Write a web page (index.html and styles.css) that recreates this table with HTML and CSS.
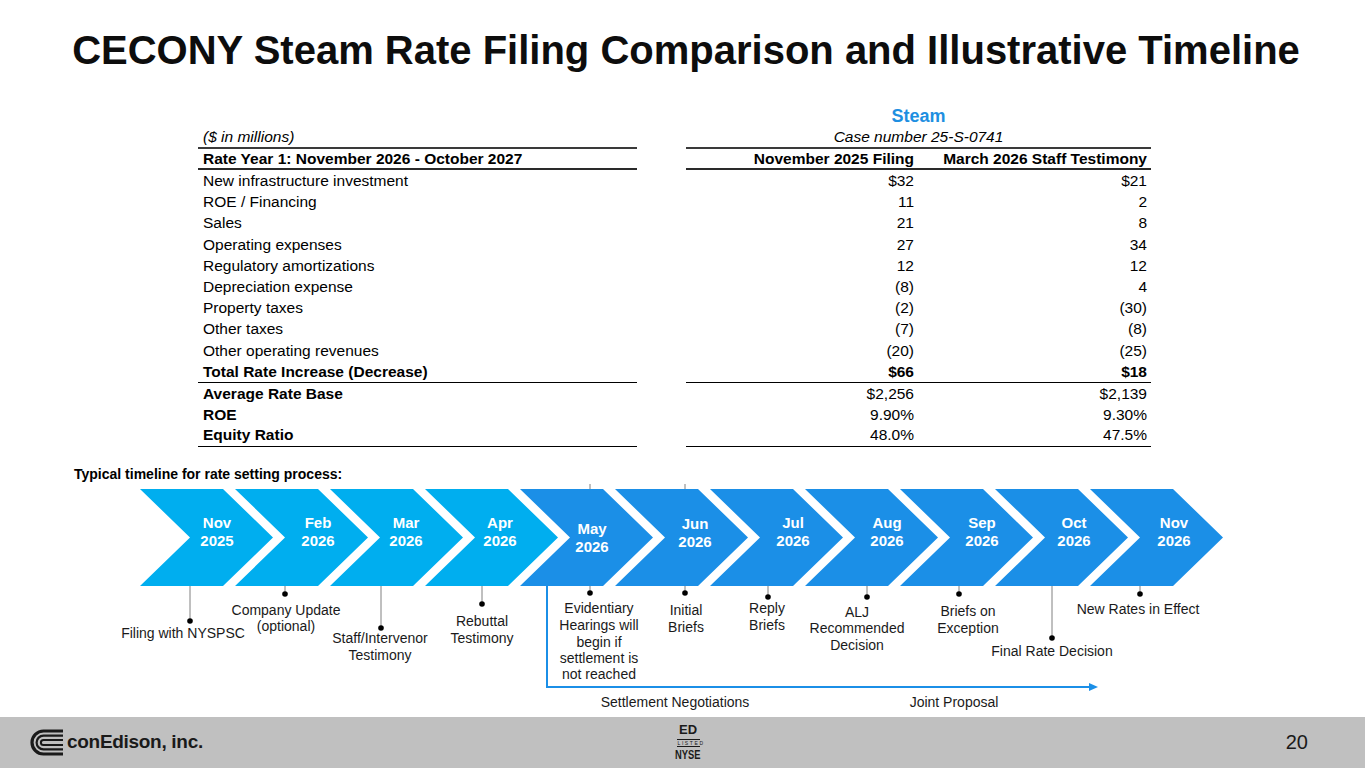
FILE: index.html
```html
<!DOCTYPE html>
<html lang="en">
<head>
<meta charset="utf-8">
<title>CECONY Steam Rate Filing Comparison and Illustrative Timeline</title>
<link rel="stylesheet" href="styles.css">
</head>
<body>
<div class="page">
  <h1 class="title">CECONY Steam Rate Filing Comparison and Illustrative Timeline</h1>

  <section class="rates">
    <div class="steam">Steam</div>
    <div class="row caption-row">
      <div class="c0 it ruled2">($ in millions)</div>
      <div class="gap"></div>
      <div class="case it ruled2">Case number 25-S-0741</div>
    </div>
    <div class="row head-row b">
      <div class="c0 ruled15">Rate Year 1: November 2026 - October 2027</div>
      <div class="gap"></div>
      <div class="num ruled15">November 2025 Filing</div>
      <div class="num ruled15">March 2026 Staff Testimony</div>
    </div>
    <div class="row"><div class="c0">New infrastructure investment</div><div class="gap"></div><div class="num">$32</div><div class="num">$21</div></div>
    <div class="row"><div class="c0">ROE / Financing</div><div class="gap"></div><div class="num">11</div><div class="num">2</div></div>
    <div class="row"><div class="c0">Sales</div><div class="gap"></div><div class="num">21</div><div class="num">8</div></div>
    <div class="row"><div class="c0">Operating expenses</div><div class="gap"></div><div class="num">27</div><div class="num">34</div></div>
    <div class="row"><div class="c0">Regulatory amortizations</div><div class="gap"></div><div class="num">12</div><div class="num">12</div></div>
    <div class="row"><div class="c0">Depreciation expense</div><div class="gap"></div><div class="num">(8)</div><div class="num">4</div></div>
    <div class="row"><div class="c0">Property taxes</div><div class="gap"></div><div class="num">(2)</div><div class="num">(30)</div></div>
    <div class="row"><div class="c0">Other taxes</div><div class="gap"></div><div class="num">(7)</div><div class="num">(8)</div></div>
    <div class="row"><div class="c0">Other operating revenues</div><div class="gap"></div><div class="num">(20)</div><div class="num">(25)</div></div>
    <div class="row total-row">
      <div class="c0 b ruled1">Total Rate Increase (Decrease)</div><div class="gap"></div>
      <div class="num b ruled1">$66</div><div class="num b ruled1">$18</div>
    </div>
    <div class="row"><div class="c0 b">Average Rate Base</div><div class="gap"></div><div class="num">$2,256</div><div class="num">$2,139</div></div>
    <div class="row"><div class="c0 b">ROE</div><div class="gap"></div><div class="num">9.90%</div><div class="num">9.30%</div></div>
    <div class="row last-row">
      <div class="c0 b ruled1">Equity Ratio</div><div class="gap"></div>
      <div class="num ruled1">48.0%</div><div class="num ruled1">47.5%</div>
    </div>
  </section>

  <div class="tl-caption">Typical timeline for rate setting process:</div>

  <div class="timeline">
    <svg class="tl-svg" width="1365" height="234" viewBox="0 0 1365 234" xmlns="http://www.w3.org/2000/svg">
      <g transform="translate(0,-483)">
        <!-- chevrons -->
        <polygon class="chev light" points="140,489 223,489 273,537.5 223,586 140,586 190,537.5"/>
        <polygon class="chev light" points="235,489 318,489 368,537.5 318,586 235,586 285,537.5"/>
        <polygon class="chev light" points="330,489 413,489 463,537.5 413,586 330,586 380,537.5"/>
        <polygon class="chev light" points="425,489 508,489 558,537.5 508,586 425,586 475,537.5"/>
        <polygon class="chev dark" points="520,489 603,489 653,537.5 603,586 520,586 570,537.5"/>
        <polygon class="chev dark" points="615,489 698,489 748,537.5 698,586 615,586 665,537.5"/>
        <polygon class="chev dark" points="710,489 793,489 843,537.5 793,586 710,586 760,537.5"/>
        <polygon class="chev dark" points="805,489 888,489 938,537.5 888,586 805,586 855,537.5"/>
        <polygon class="chev dark" points="900,489 983,489 1033,537.5 983,586 900,586 950,537.5"/>
        <polygon class="chev dark" points="995,489 1078,489 1128,537.5 1078,586 995,586 1045,537.5"/>
        <polygon class="chev dark" points="1090,489 1173,489 1223,537.5 1173,586 1090,586 1140,537.5"/>

        <!-- chevron labels -->
        <text class="cv" x="217" y="527.5">Nov</text><text class="cv" x="217" y="545.5">2025</text>
        <text class="cv" x="318" y="527.5">Feb</text><text class="cv" x="318" y="545.5">2026</text>
        <text class="cv" x="406" y="527.5">Mar</text><text class="cv" x="406" y="545.5">2026</text>
        <text class="cv" x="500" y="527.5">Apr</text><text class="cv" x="500" y="545.5">2026</text>
        <text class="cv" x="592" y="534">May</text><text class="cv" x="592" y="552">2026</text>
        <text class="cv" x="695" y="528.5">Jun</text><text class="cv" x="695" y="546.5">2026</text>
        <text class="cv" x="793" y="527.5">Jul</text><text class="cv" x="793" y="545.5">2026</text>
        <text class="cv" x="887" y="527.5">Aug</text><text class="cv" x="887" y="545.5">2026</text>
        <text class="cv" x="982" y="527.5">Sep</text><text class="cv" x="982" y="545.5">2026</text>
        <text class="cv" x="1074" y="527.5">Oct</text><text class="cv" x="1074" y="545.5">2026</text>
        <text class="cv" x="1174" y="527.5">Nov</text><text class="cv" x="1174" y="545.5">2026</text>

        <!-- marker ticks above May / Jun -->
        <line class="mk" x1="590" y1="484" x2="590" y2="489"/>
        <line class="mk" x1="685" y1="484" x2="685" y2="489"/>

        <!-- marker lines and dots -->
        <line class="mk" x1="190" y1="586" x2="190" y2="621"/><circle class="dot" cx="190" cy="621" r="2.8"/>
        <line class="mk" x1="285" y1="586" x2="285" y2="594"/><circle class="dot" cx="285" cy="594" r="2.8"/>
        <line class="mk" x1="381" y1="586" x2="381" y2="628"/><circle class="dot" cx="381" cy="628" r="2.8"/>
        <line class="mk" x1="482" y1="586" x2="482" y2="604"/><circle class="dot" cx="482" cy="604" r="2.8"/>
        <line class="mk" x1="590" y1="586" x2="590" y2="593"/><circle class="dot" cx="590" cy="593" r="2.8"/>
        <line class="mk" x1="685" y1="586" x2="685" y2="593"/><circle class="dot" cx="685" cy="593" r="2.8"/>
        <line class="mk" x1="768" y1="586" x2="768" y2="597"/><circle class="dot" cx="768" cy="597" r="2.8"/>
        <line class="mk" x1="867" y1="586" x2="867" y2="597"/><circle class="dot" cx="867" cy="597" r="2.8"/>
        <line class="mk" x1="959" y1="586" x2="959" y2="594"/><circle class="dot" cx="959" cy="594" r="2.8"/>
        <line class="mk" x1="1052" y1="586" x2="1052" y2="638"/><circle class="dot" cx="1052" cy="638" r="2.8"/>
        <line class="mk" x1="1140" y1="586" x2="1140" y2="594"/><circle class="dot" cx="1140" cy="594" r="2.8"/>

        <!-- settlement bracket -->
        <polyline class="bracket" points="547,586 547,687 1090,687"/>
        <polygon class="arrowhead" points="1089,683 1098,687 1089,691"/>

        <!-- event labels -->
        <text class="lb" x="183" y="638">Filing with NYSPSC</text>
        <text class="lb" x="286" y="615">Company Update</text><text class="lb" x="286" y="631">(optional)</text>
        <text class="lb" x="380" y="643">Staff/Intervenor</text><text class="lb" x="380" y="660">Testimony</text>
        <text class="lb" x="482" y="626">Rebuttal</text><text class="lb" x="482" y="643">Testimony</text>
        <text class="lb" x="599" y="613">Evidentiary</text>
        <text class="lb" x="599" y="630">Hearings will</text>
        <text class="lb" x="599" y="647">begin if</text>
        <text class="lb" x="599" y="663">settlement is</text>
        <text class="lb" x="599" y="679">not reached</text>
        <text class="lb" x="686" y="615">Initial</text><text class="lb" x="686" y="632">Briefs</text>
        <text class="lb" x="767" y="613">Reply</text><text class="lb" x="767" y="630">Briefs</text>
        <text class="lb" x="857" y="617">ALJ</text><text class="lb" x="857" y="633">Recommended</text><text class="lb" x="857" y="650">Decision</text>
        <text class="lb" x="968" y="616">Briefs on</text><text class="lb" x="968" y="633">Exception</text>
        <text class="lb" x="1052" y="656">Final Rate Decision</text>
        <text class="lb" x="1138" y="614">New Rates in Effect</text>
        <text class="lb" x="675" y="707">Settlement Negotiations</text>
        <text class="lb" x="954" y="707">Joint Proposal</text>
      </g>
    </svg>
  </div>

  <footer class="footer">
    <div class="brand">
      <svg class="brand-icon" width="33" height="27" viewBox="0 0 33 27" xmlns="http://www.w3.org/2000/svg">
        <path d="M33 2 H13.5 A11.5 11.5 0 0 0 13.5 25 H33" fill="none" stroke="#1a1a1a" stroke-width="3.2"/>
        <path d="M33 6.6 H13.5 A6.9 6.9 0 0 0 13.5 20.4 H33" fill="none" stroke="#1a1a1a" stroke-width="2.2"/>
        <path d="M33 10.9 H13.5 A2.6 2.6 0 0 0 13.5 16.1 H33" fill="none" stroke="#1a1a1a" stroke-width="2"/>
      </svg>
      <span class="brand-name">conEdison, inc.</span>
    </div>
    <div class="nyse">
      <div class="nyse-ed">ED</div>
      <div class="nyse-listed">LISTED</div>
      <div class="nyse-name">NYSE</div>
    </div>
    <div class="pageno">20</div>
  </footer>
</div>
</body>
</html>
```

FILE: styles.css
```css
body {
  margin: 0;
  font-family: "Liberation Sans", Arial, sans-serif;
  color: #000;
  background: #fff;
}

.page {
  width: 1365px;
  height: 768px;
  display: flex;
  flex-direction: column;
  overflow: hidden;
}

.title {
  margin: 0;
  padding: 26px 0 0 7px;
  height: 48px;
  line-height: 48px;
  font-size: 40px;
  font-weight: bold;
  text-align: center;
  color: #0d0d0d;
  flex-shrink: 0;
}

/* ---------- rate table ---------- */
.rates {
  margin: 32px 0 0 198px;
  width: 953px;
  font-size: 15.5px;
  flex-shrink: 0;
}

.steam {
  margin-left: 488px;
  width: 465px;
  height: 21px;
  line-height: 21px;
  text-align: center;
  color: #1e8fe1;
  font-weight: bold;
  font-size: 18px;
}

.row {
  display: grid;
  grid-template-columns: 439px 49px 232px 233px;
  height: 21.2px;
  line-height: 21px;
}

.row > div {
  box-sizing: border-box;
  white-space: nowrap;
}

.c0 { padding-left: 5px; }
.num { text-align: right; padding-right: 4px; }
.case { grid-column: 3 / span 2; text-align: center; }
.it { font-style: italic; }
.b { font-weight: bold; }

.caption-row { height: 22px; line-height: 20px; }
.head-row { height: 21px; line-height: 19px; }
.total-row { height: 22px; line-height: 21px; }
.last-row { height: 21.6px; line-height: 20.6px; }

.ruled2 { border-bottom: 2px solid #3a3a3a; }
.ruled15 { border-bottom: 2px solid #2a2a2a; }
.ruled1 { border-bottom: 1px solid #000; }

/* ---------- timeline ---------- */
.tl-caption {
  margin: 18px 0 0 74px;
  height: 18px;
  line-height: 18px;
  font-size: 14px;
  font-weight: bold;
  flex-shrink: 0;
}

.timeline {
  height: 234px;
  flex-shrink: 0;
}

.tl-svg { display: block; }

.chev.light { fill: #00aeef; }
.chev.dark { fill: #1b8fe7; }

.cv {
  fill: #fff;
  font-family: "Liberation Sans", Arial, sans-serif;
  font-weight: bold;
  font-size: 15px;
  text-anchor: middle;
}

.lb {
  fill: #1a1a1a;
  font-family: "Liberation Sans", Arial, sans-serif;
  font-size: 14px;
  text-anchor: middle;
}

.mk { stroke: #808080; stroke-width: 1; }
.dot { fill: #000; }
.bracket { fill: none; stroke: #1b8fe7; stroke-width: 2; }
.arrowhead { fill: #1b8fe7; }

/* ---------- footer ---------- */
.footer {
  height: 51px;
  flex-shrink: 0;
  background: #c0c0c0;
  display: grid;
  grid-template-columns: 1fr auto 1fr;
  align-items: center;
}

.brand {
  display: flex;
  align-items: center;
  padding-left: 30px;
}

.brand-icon { display: block; }

.brand-name {
  margin-left: 4px;
  font-size: 19px;
  font-weight: bold;
  color: #1a1a1a;
  letter-spacing: -0.3px;
}

.nyse {
  margin-left: 11px;
  display: flex;
  flex-direction: column;
  align-items: center;
  color: #1a1a1a;
}

.nyse-ed {
  font-size: 13px;
  font-weight: bold;
  line-height: 12px;
}

.nyse-listed {
  margin-top: 3px;
  width: 22px;
  font-size: 5px;
  line-height: 5px;
  letter-spacing: 1.6px;
  text-align: center;
  border-top: 1px solid #1a1a1a;
  border-bottom: 1px solid #1a1a1a;
  padding: 1px 0 0 1px;
}

.nyse-name {
  margin-top: 2px;
  font-size: 13px;
  font-weight: bold;
  line-height: 12px;
  transform: scaleX(0.72);
}

.pageno {
  justify-self: end;
  padding-right: 57px;
  font-size: 20px;
  color: #1a1a1a;
}
```
